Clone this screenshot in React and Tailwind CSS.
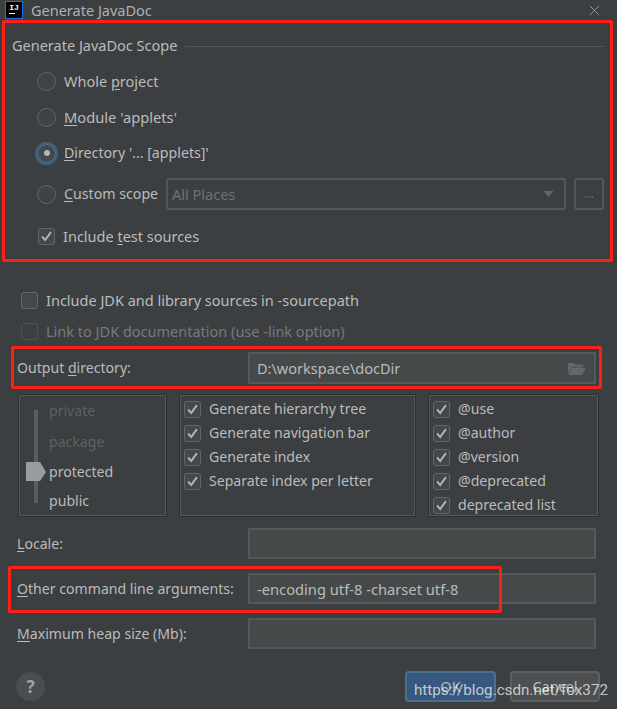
const Check = () => (
  <svg viewBox="0 0 17 17" className="w-[15px] h-[15px]">
    <path d="M3.5 8.5 L7 12.5 L13.5 3.5" fill="none" stroke="#b4b6b8" strokeWidth="2.2" />
  </svg>
);

function Checkbox({ checked, disabled }) {
  return (
    <span
      className={
        "w-[17px] h-[17px] rounded-[3px] border-[1.5px] flex items-center justify-center shrink-0 " +
        (disabled ? "border-[#4e5254] bg-[#3c3f41]" : "border-[#636668] bg-[#43494a]")
      }
    >
      {checked && <Check />}
    </span>
  );
}

function Radio({ selected }) {
  if (selected) {
    return (
      <span className="w-[19px] h-[19px] rounded-full bg-[#43494a] border border-[#5a7a99] outline-2 outline-[#3d6185] flex items-center justify-center shrink-0">
        <span className="w-[6px] h-[6px] rounded-full bg-[#b4b6b8]" />
      </span>
    );
  }
  return <span className="w-[19px] h-[19px] rounded-full bg-[#3f4344] border-[1.5px] border-[#636668] shrink-0" />;
}

const Txt = ({ className = "", children }) => <span className={"whitespace-nowrap " + className}>{children}</span>;

function RadioRow({ selected, className, children }) {
  return (
    <div className={"flex items-center gap-[8px] pl-[25px] " + className}>
      <Radio selected={selected} />
      <Txt>{children}</Txt>
    </div>
  );
}

function CheckRow({ label }) {
  return (
    <div className="h-[24px] flex items-center gap-[8px] text-[14.1px]">
      <Checkbox checked />
      <Txt>{label}</Txt>
    </div>
  );
}

function FieldRow({ label, className, children }) {
  return (
    <div className={"flex items-center pl-[17px] pr-[21px] " + className}>
      <span className="w-[231px] text-[14.1px] whitespace-nowrap">{label}</span>
      <div className="flex-1 h-full border-2 border-[#54585a] bg-[#45494a] flex items-center pl-[7px] pr-[8px]">
        {children}
      </div>
    </div>
  );
}

const M = ({ children }) => <span className="underline underline-offset-2">{children}</span>;

export default function App() {
  return (
    <div
      className="relative w-[617px] h-[709px] overflow-hidden bg-[#3c3f41] text-[#bbbbbb] text-[14.5px] leading-[20px] flex flex-col"
      style={{ fontFamily: '"Noto Sans", sans-serif' }}
    >
      {/* title bar */}
      <div className="h-[20px] flex items-center pl-[6px] pr-[17px] shrink-0">
        <span className="w-[16px] h-[16px] bg-black outline outline-[#1a73e8] flex flex-col items-center shrink-0">
          <span className="text-white font-bold text-[8px] leading-[9px] mt-[1px]" style={{ fontFamily: '"Liberation Mono", monospace' }}>IJ</span>
          <span className="w-[6px] h-[1px] bg-white self-start ml-[3px] mt-[1px]" />
        </span>
        <span className="ml-[9px] text-[#aeb0b2]">Generate JavaDoc</span>
        <svg viewBox="0 0 12 12" className="w-[11px] h-[11px] ml-auto">
          <path d="M1 1 L11 11 M11 1 L1 11" stroke="#9a9c9e" strokeWidth="1" fill="none" />
        </svg>
      </div>

      {/* scope group */}
      <div className="pl-[12px] pr-[13px] shrink-0">
        <div className="h-[20px] mt-[16px] flex items-center gap-[8px]">
          <Txt className="pb-[2px]">Generate JavaDoc Scope</Txt>
          <span className="flex-1 h-[1px] bg-[#515658]" />
        </div>
        <RadioRow className="h-[36px] mt-[7px]">Whole <M>p</M>roject</RadioRow>
        <RadioRow className="h-[36px] text-[14.7px]"><M>M</M>odule 'applets'</RadioRow>
        <RadioRow selected className="h-[36px] text-[14.2px]"><M>D</M>irectory '... [applets]'</RadioRow>
        <div className="h-[32px] mt-[7px] flex items-center gap-[8px] pl-[25px]">
          <Radio />
          <Txt className="w-[94px] text-[14.2px]"><M>C</M>ustom scope</Txt>
          <div className="flex-1 h-full border-2 border-[#54585a] rounded-[3px] flex items-center justify-between pl-[4px] pr-[10px] text-[#6f7173]">
            <Txt>All Places</Txt>
            <svg viewBox="0 0 10 6" className="w-[11px] h-[6px]">
              <path d="M0 0 H10 L5 6 Z" fill="#636567" />
            </svg>
          </div>
          <div className="w-[30px] h-full border-2 border-[#54585a] rounded-[3px] flex items-center justify-center text-[#6f7173] text-[12px]">...</div>
        </div>
        <div className="h-[20px] mt-[16px] flex items-center gap-[8px] pl-[26px]">
          <Checkbox checked />
          <Txt className="pb-[1px]">Include <M>t</M>est sources</Txt>
        </div>
      </div>

      {/* options */}
      <div className="h-[20px] mt-[44px] pl-[21px] flex items-center gap-[8px] shrink-0">
        <Checkbox />
        <Txt className="pb-[1px]">Include JDK and library sources in -sourcepath</Txt>
      </div>
      <div className="h-[20px] mt-[11px] pl-[21px] flex items-center gap-[8px] text-[#787a7c] shrink-0">
        <Checkbox disabled />
        <Txt className="pb-[1px]">Link to JDK documentation (use -link option)</Txt>
      </div>

      <FieldRow className="h-[32px] mt-[11px] shrink-0" label={<>Output <M>d</M>irectory:</>}>
        <Txt className="flex-1 pb-[1px]">D:\workspace\docDir</Txt>
        <svg viewBox="0 0 20 16" className="w-[19px] h-[15px]">
          <path d="M1 2 H7 L9 4 H17 V6 H5 L1 14 Z M5 7 H20 L16 15 H1.5 Z" fill="#626769" />
        </svg>
      </FieldRow>

      {/* panels */}
      <div className="h-[123px] mt-[10px] pl-[18px] pr-[18px] flex gap-[12px] shrink-0">
        <div className="w-[149px] border border-[#2d3032] shadow-[inset_0_0_0_1px_#54575a] p-[1px] flex">
          <svg viewBox="0 0 28 119" className="w-[28px] h-[119px] shrink-0 ml-[4px]">
            <path d="M10 14 H14 V107 H10 Z" fill="#5a5d5f" />
            <path d="M2 66 H16 L22 76 L16 85 H2 Z" fill="#9a9d9f" />
          </svg>
          <div className="flex flex-col ml-[-3px] text-[14.1px]">
            <span className="h-[30px] shrink-0 flex items-center text-[#5e6062]">private</span>
            <span className="h-[31px] shrink-0 flex items-center text-[#5e6062]">package</span>
            <span className="h-[30px] shrink-0 flex items-center">protected</span>
            <span className="h-[28px] shrink-0 flex items-center">public</span>
          </div>
        </div>
        <div className="w-[237px] border border-[#2d3032] shadow-[inset_0_0_0_1px_#54575a] pl-[4px] pt-[2px]">
          <CheckRow label="Generate hierarchy tree" />
          <CheckRow label="Generate navigation bar" />
          <CheckRow label="Generate index" />
          <CheckRow label="Separate index per letter" />
        </div>
        <div className="w-[171px] border border-[#2d3032] shadow-[inset_0_0_0_1px_#54575a] pl-[4px] pt-[2px]">
          <CheckRow label="@use" />
          <CheckRow label="@author" />
          <CheckRow label="@version" />
          <CheckRow label="@deprecated" />
          <CheckRow label="deprecated list" />
        </div>
      </div>

      <FieldRow className="h-[31px] mt-[11px] shrink-0" label={<><M>L</M>ocale:</>} />
      <FieldRow className="h-[31px] mt-[14px] shrink-0" label={<><M>O</M>ther command line arguments:</>}>
        <Txt className="text-[14.7px]">-encoding utf-8 -charset utf-8</Txt>
      </FieldRow>
      <FieldRow className="h-[31px] mt-[14px] shrink-0" label={<><M>M</M>aximum heap size (Mb):</>} />

      {/* footer */}
      <div className="h-[31px] mt-[22px] pl-[16px] pr-[17px] flex items-center shrink-0">
        <span className="w-[29px] h-[29px] rounded-full bg-[#4b4e50] text-[#a0a2a4] font-bold text-[17px] flex items-center justify-center">?</span>
        <button className="ml-auto w-[91px] h-full rounded-[4px] bg-[#365880] border-2 border-[#4c708c] text-[#bbbbbb] pb-[1px]">OK</button>
        <button className="ml-[14px] w-[90px] h-full rounded-[4px] bg-[#4c5052] border-2 border-[#5e6060] text-[#bbbbbb] pb-[1px]">Cancel</button>
      </div>

      {/* screenshot annotations */}
      <div className="absolute left-[2px] top-[20px] w-[611px] h-[242px] border-[3px] border-[#ff2015] rounded-[2px]" />
      <div className="absolute left-[11px] top-[346px] w-[591px] h-[43px] border-[3px] border-[#ff2015] rounded-[2px]" />
      <div className="absolute left-[8px] top-[566px] w-[494px] h-[47px] border-[3px] border-[#ff2015] rounded-[2px]" />
      <span
        className="absolute left-[414px] top-[680px] text-[15.2px] leading-[20px] text-white/70 whitespace-nowrap"
        style={{ fontFamily: "Roboto, sans-serif" }}
      >
        https://blog.csdn.net/fox372
      </span>
    </div>
  );
}
